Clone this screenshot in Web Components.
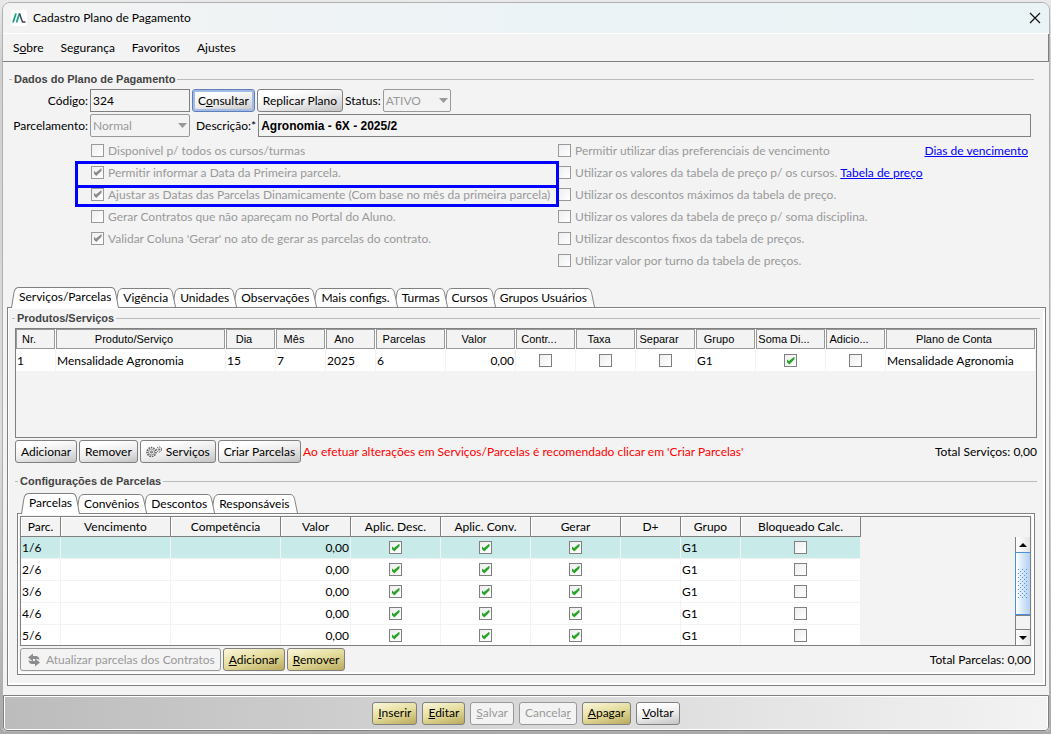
<!DOCTYPE html>
<html lang="pt-BR">
<head>
<meta charset="utf-8">
<title>Cadastro Plano de Pagamento</title>
<style>
body {
    margin: 0;
    padding: 2px 1px 2px 2px;
    font: 12px/16px Lato, "Open Sans", sans-serif;
    color: #000;
    background: linear-gradient(to bottom, #e9e9e9 0, #cfcfcf 60px, #dcdcdc 60%, #a9a9a9 100%);
    --edge: #808080;
    --face: #f3f3f3;
    --off: #999;
    --head-font: "Liberation Sans", Arial, sans-serif;
}
</style>
</head>
<body>
<app-window heading="Cadastro Plano de Pagamento">
    <menu-bar slot="menu"></menu-bar>
    <plan-form></plan-form>
    <tab-panel tabs="Serviços/Parcelas,Vigência,Unidades,Observações,Mais configs.,Turmas,Cursos,Grupos Usuários">
        <services-section></services-section>
        <installments-section></installments-section>
    </tab-panel>
    <action-bar slot="footer">
        <push-button tone="gold"><u>I</u>nserir</push-button>
        <push-button tone="gold"><u>E</u>ditar</push-button>
        <push-button disabled><u>S</u>alvar</push-button>
        <push-button disabled>Cancela<u>r</u></push-button>
        <push-button tone="gold"><u>A</u>pagar</push-button>
        <push-button><u>V</u>oltar</push-button>
    </action-bar>
</app-window>

<script>
// attaches an open shadow root filled from a html string
class BaseElement extends HTMLElement {
    render(html) {
        const template = document.createElement('template');
        template.innerHTML = html;
        this.attachShadow({mode: 'open'}).append(template.content.cloneNode(true));
    }
}

// shared by every element that draws a tick box
const checkStyle = `
input[type=checkbox] {
    appearance: none;
    flex: none;
    width: 13px;
    height: 13px;
    margin: 0;
    border: 1px solid var(--edge);
    background: linear-gradient(135deg, #eee, #fff);
    display: grid;
    place-items: center;
}
input[type=checkbox]:checked::before {
    content: "";
    width: 8px;
    height: 8px;
    background: #2aa52a;
    clip-path: polygon(0 30%, 30% 55%, 100% 0, 100% 35%, 35% 100%, 0 65%);
}
input[type=checkbox]:disabled { border-color: var(--off); }
input[type=checkbox]:disabled:checked::before { background: #8c8c8c; }
`;

class AppWindow extends BaseElement {
    connectedCallback() {
        this.render(`
<style>
:host {
    display: block;
    box-sizing: border-box;
    border: 1px solid #b0b0b0;
    border-radius: 8px 8px 4px 4px;
    background: var(--face);
    overflow: hidden;
}
header {
    display: flex;
    align-items: center;
    gap: 6px;
    height: 30px;
    padding: 0 8px;
    background: linear-gradient(to right, #f3f3f3, #ecf3f6 50%, #eaf3f5);
    border-bottom: 1px solid #fff;
}
h1 {
    flex: 1;
    margin: 0;
    font-size: 12px;
    font-weight: normal;
}
button {
    border: 0;
    padding: 0;
    background: none;
    display: grid;
}
main { padding: 10px 3px 9px 4px; }
</style>
<header>
    <svg width="16" height="16" viewBox="0 0 16 16"><rect width="16" height="16" rx="2" fill="#fff"/><path d="M2 12.500 5 3.500M5.500 12.500 8.500 3.500" stroke="#1d9c86" stroke-width="1.800" fill="none"/><path d="M8.500 3.500 11.500 12h3" stroke="#3c4a50" stroke-width="1.500" fill="none"/></svg>
    <h1></h1>
    <button aria-label="Fechar"><svg width="12" height="12" viewBox="0 0 12 12"><path d="M1 1 11 11M11 1 1 11" stroke="#111" stroke-width="1.200"/></svg></button>
</header>
<slot name="menu"></slot>
<main><slot></slot></main>
<slot name="footer"></slot>
`);
        this.shadowRoot.querySelector('h1').textContent = this.getAttribute('heading');
    }
}
customElements.define('app-window', AppWindow);

class MenuBar extends BaseElement {
    connectedCallback() {
        this.render(`
<style>
:host {
    display: block;
    border-bottom: 1px solid var(--edge);
    border-right: 1px solid var(--edge);
}
nav {
    display: flex;
    align-items: center;
    gap: 17px;
    height: 27px;
    padding: 0 10px;
}
button {
    border: 0;
    padding: 0;
    background: none;
    font: inherit;
    color: inherit;
}
</style>
<nav>
    <button>S<u>o</u>bre</button>
    <button>Segurança</button>
    <button>Favoritos</button>
    <button>Ajustes</button>
</nav>
`);
    }
}
customElements.define('menu-bar', MenuBar);

class PushButton extends BaseElement {
    connectedCallback() {
        this.render(`
<style>
:host { display: block; }
button {
    display: flex;
    align-items: center;
    gap: 4px;
    box-sizing: border-box;
    height: 23px;
    padding: 0 5px;
    border: 1px solid var(--edge);
    border-radius: 3px;
    font: inherit;
    color: #000;
    white-space: nowrap;
    background: linear-gradient(170deg, #fff 20%, #ececec 55%, #c4c4c4 100%);
}
:host([tone=gold]) button {
    background: linear-gradient(165deg, #f8f4d4 5%, #e4dc9c 50%, #b9a95c 100%);
}
:host([focused]) button {
    border-color: #5f7fb8;
    box-shadow: inset 0 0 0 2px #a3bce6;
}
button:disabled {
    color: var(--off);
    border-color: var(--off);
    background: var(--face);
}
</style>
<button><slot name="icon"></slot><span><slot></slot></span></button>
`);
        this.shadowRoot.querySelector('button').disabled = this.hasAttribute('disabled');
    }
}
customElements.define('push-button', PushButton);

class CheckField extends BaseElement {
    connectedCallback() {
        this.render(`
<style>
${checkStyle}
:host { display: block; }
label {
    display: flex;
    align-items: center;
    gap: 4px;
    height: 22px;
    color: var(--off);
    white-space: nowrap;
}
label input[type=checkbox] { margin-bottom: 2px; }
</style>
<label><input type="checkbox" disabled><span><slot></slot></span></label>
`);
        this.shadowRoot.querySelector('input').checked = this.hasAttribute('checked');
    }
}
customElements.define('check-field', CheckField);

// titled group: a rule with the title sitting on it
class GroupBox extends BaseElement {
    connectedCallback() {
        this.render(`
<style>
:host { display: block; }
h2 {
    display: flex;
    align-items: center;
    gap: 2px;
    margin: 0 0 3px;
    font: bold 11px/14px var(--head-font);
    color: #444;
}
h2::before, h2::after {
    content: "";
    width: 3px;
    height: 1px;
    background: #bbb;
}
h2::after { flex: 1; }
</style>
<h2></h2>
<slot></slot>
`);
        this.shadowRoot.querySelector('h2').textContent = this.getAttribute('heading');
    }
}
customElements.define('group-box', GroupBox);

class PlanForm extends BaseElement {
    connectedCallback() {
        this.render(`
<style>
:host { display: block; }
group-box { margin: 0 12px 15px 2px; }
.row {
    display: flex;
    align-items: center;
    gap: 2px;
    height: 23px;
    margin-bottom: 2px;
    padding-right: 3px;
}
.row > label { white-space: nowrap; }
.row > label:first-child {
    width: 79px;
    display: flex;
    justify-content: flex-end;
}
input, select {
    box-sizing: border-box;
    width: 100px;
    height: 23px;
    margin: 0;
    padding: 0 2px;
    border: 1px solid var(--edge);
    background: var(--face);
    font: inherit;
    color: #000;
}
select {
    appearance: none;
    border-color: var(--off);
    border-radius: 2px;
}
select:disabled {
    color: var(--off);
    opacity: 1;
}
.select {
    display: grid;
    align-items: center;
}
.select > * { grid-area: 1 / 1; }
.select svg {
    justify-self: end;
    margin-right: 3px;
}
#status { width: 68px; }
#descricao {
    flex: 1;
    font: bold 12px var(--head-font);
}
.gap { margin-left: 4px; }
.checks {
    position: relative;
    display: grid;
    grid-template-columns: 467px 1fr;
    grid-template-rows: repeat(6, 22px);
    grid-auto-flow: column;
    margin-top: 3px;
    padding-left: 82px;
}
.line {
    display: flex;
    align-items: center;
    gap: 3px;
    padding-right: 6px;
}
.line a { color: #00f; }
.push { margin-left: auto; }
.skip { grid-area: 6 / 1; }
/* highlight frames laid over the two date options */
.mark {
    position: absolute;
    left: 66px;
    width: 484px;
    box-sizing: border-box;
    border: 3px solid #00f;
}
.mark.first { top: 21px; height: 27px; }
.mark.second { top: 45px; height: 22px; }
</style>
<group-box heading="Dados do Plano de Pagamento">
    <div class="row">
        <label for="codigo">Código:</label>
        <input id="codigo" value="324">
        <push-button focused>C<u>o</u>nsultar</push-button>
        <push-button>Replicar Plano</push-button>
        <label for="status">Status:</label>
        <div class="select">
            <select id="status" disabled><option>ATIVO</option></select>
            <svg width="9" height="5"><path d="M0 0h9L4.500 5z" fill="#999"/></svg>
        </div>
    </div>
    <div class="row">
        <label for="parcelamento">Parcelamento:</label>
        <div class="select">
            <select id="parcelamento" disabled><option>Normal</option></select>
            <svg width="9" height="5"><path d="M0 0h9L4.500 5z" fill="#999"/></svg>
        </div>
        <label class="gap" for="descricao">Descrição:*</label>
        <input id="descricao" value="Agronomia - 6X - 2025/2">
    </div>
    <div class="checks">
        <check-field>Disponível p/ todos os cursos/turmas</check-field>
        <check-field checked>Permitir informar a Data da Primeira parcela.</check-field>
        <check-field checked>Ajustar as Datas das Parcelas Dinamicamente (Com base no mês da primeira parcela)</check-field>
        <check-field>Gerar Contratos que não apareçam no Portal do Aluno.</check-field>
        <check-field checked>Validar Coluna 'Gerar' no ato de gerar as parcelas do contrato.</check-field>
        <span class="skip"></span>
        <div class="line"><check-field>Permitir utilizar dias preferenciais de vencimento</check-field><a class="push" href="#dias">Dias de vencimento</a></div>
        <div class="line"><check-field>Utilizar os valores da tabela de preço p/ os cursos.</check-field><a href="#tabela">Tabela de preço</a></div>
        <check-field>Utilizar os descontos máximos da tabela de preço.</check-field>
        <check-field>Utilizar os valores da tabela de preço p/ soma disciplina.</check-field>
        <check-field>Utilizar descontos fixos da tabela de preços.</check-field>
        <check-field>Utilizar valor por turno da tabela de preços.</check-field>
        <div class="mark first"></div>
        <div class="mark second"></div>
    </div>
</group-box>
`);
    }
}
customElements.define('plan-form', PlanForm);

class TabPanel extends BaseElement {
    connectedCallback() {
        this.render(`
<style>
:host { display: block; }
.strip {
    display: flex;
    align-items: flex-end;
    height: 20px;
    padding-left: 4px;
}
button {
    display: flex;
    position: relative;
    height: 19px;
    margin: 0 -4px 0 0;
    padding: 0;
    border: 0;
    background: none;
    font: inherit;
    line-height: 18px;
    color: inherit;
    white-space: nowrap;
}
button span {
    box-sizing: border-box;
    height: 100%;
    border-top: 1px solid var(--edge);
    background: #fff;
}
button svg {
    width: 8px;
    height: 100%;
    fill: #fff;
    stroke: var(--edge);
}
button[aria-selected=true] {
    height: 21px;
    margin-bottom: -1px;
}
.panel {
    border: 1px solid var(--edge);
    box-shadow: inset 1px 1px #fff, inset -2px -2px #fff;
    padding: var(--panel-padding, 3px 5px 10px);
}
</style>
<div class="strip" role="tablist"></div>
<div class="panel" role="tabpanel"><slot></slot></div>
`);
        const names = this.getAttribute('tabs').split(',');
        names.forEach((name, i) => {
            const tab = document.createElement('button');
            tab.setAttribute('role', 'tab');
            tab.setAttribute('aria-selected', i === 0);
            // earlier tabs overlap the later ones
            tab.style.zIndex = names.length - i;
            tab.innerHTML = `
<svg viewBox="0 0 8 20" preserveAspectRatio="none"><path d="M.5 20 3 5Q4 .5 8 .5V20" stroke="none"/><path d="M.5 20 3 5Q4 .5 8 .5" fill="none"/></svg><span></span><svg viewBox="0 0 8 20" preserveAspectRatio="none"><path d="M0 .5Q3.500.5 4.500 5L7.500 20H0" stroke="none"/><path d="M0 .5Q3.500.5 4.500 5L7.500 20" fill="none"/></svg>`;
            tab.querySelector('span').textContent = name;
            this.shadowRoot.querySelector('.strip').append(tab);
        });
    }
}
customElements.define('tab-panel', TabPanel);

class ScrollBar extends BaseElement {
    connectedCallback() {
        this.render(`
<style>
:host {
    display: flex;
    flex-direction: column;
    box-sizing: border-box;
    width: 15px;
    border-left: 1px solid var(--edge);
}
button {
    display: grid;
    place-items: center;
    height: 15px;
    padding: 0;
    border: 0;
    background: linear-gradient(to right, #fff, #e4e4e4);
}
.thumb {
    height: 61px;
    margin-left: -1px;
    border: 1px solid #4a90e0;
    border-right: 0;
    display: grid;
    place-items: center;
    background: linear-gradient(to right, #fff, #dcebfb 40%, #b4d0f2);
}
.track {
    flex: 1;
    border: 1px solid var(--edge);
    border-width: 1px 0;
}
</style>
<button aria-label="Subir"><svg width="8" height="4"><path d="M0 4 4 0 8 4z"/></svg></button>
<div class="thumb">
    <svg width="10" height="30"><defs><pattern id="grip" width="4" height="4" patternUnits="userSpaceOnUse"><path d="M0 0h1v1H0zM2 2h1v1H2z" fill="#4a90e0"/></pattern></defs><rect width="10" height="30" fill="url(#grip)"/></svg>
</div>
<div class="track"></div>
<button aria-label="Descer"><svg width="8" height="4"><path d="M0 0 4 4 8 0z"/></svg></button>
`);
    }
}
customElements.define('scroll-bar', ScrollBar);

// columns: [title, width, kind], kind is text, num or check; a width of 0 takes what is left
class DataGrid extends BaseElement {
    connectedCallback() {
        this.render(`
<style>
${checkStyle}
:host {
    display: flex;
    box-sizing: border-box;
    height: var(--grid-height);
    border: 1px solid var(--edge);
    overflow: hidden;
}
table {
    table-layout: fixed;
    width: 10px;
    border-collapse: separate;
    border-spacing: 0;
    align-self: flex-start;
}
:host([fill]) table { width: 100%; }
th {
    box-sizing: border-box;
    height: 20px;
    padding: 1px 0 0;
    font-weight: normal;
    line-height: 18px;
    white-space: nowrap;
    border-right: 1px solid var(--edge);
    border-bottom: 1px solid var(--edge);
    box-shadow: inset 1px 1px #fff;
}
:host([raised]) th {
    height: 21px;
    border: 0;
    box-shadow: none;
    padding: 0 1px 1px 0;
    background: #fff;
}
:host([raised]) th div {
    border: 1px solid #999;
    background: var(--face);
    font: 11px/18px var(--head-font);
    padding: 0 14px 0 1px;
}
td {
    box-sizing: border-box;
    height: 22px;
    padding: 0 1px;
    line-height: 16px;
    white-space: nowrap;
    background: #fff;
    border: solid var(--face);
    border-width: 0 1px 1px 0;
}
tr.selected td { background: #c8ebea; }
td.num { text-align: right; }
td.check input { margin: auto; }
scroll-bar { margin: 20px 0 0 auto; }
</style>
<table><colgroup></colgroup><thead><tr></tr></thead><tbody></tbody></table>
`);
    }
    setData(columns, rows) {
        const root = this.shadowRoot;
        columns.forEach(([title, width]) => {
            const col = document.createElement('col');
            if (width) col.style.width = width + 'px';
            root.querySelector('colgroup').append(col);
            const th = document.createElement('th');
            th.innerHTML = '<div></div>';
            th.firstChild.textContent = title;
            root.querySelector('thead tr').append(th);
        });
        rows.forEach((row, r) => {
            const tr = document.createElement('tr');
            if (!this.hasAttribute('raised') && r === 0) tr.classList.add('selected');
            row.forEach((value, i) => {
                const td = document.createElement('td');
                const kind = columns[i][2];
                td.classList.add(kind);
                if (kind === 'check') {
                    const box = document.createElement('input');
                    box.type = 'checkbox';
                    box.checked = value;
                    box.setAttribute('aria-label', columns[i][0]);
                    td.append(box);
                } else {
                    td.textContent = value;
                }
                tr.append(td);
            });
            root.querySelector('tbody').append(tr);
        });
        if (this.hasAttribute('scroll')) root.append(document.createElement('scroll-bar'));
    }
}
customElements.define('data-grid', DataGrid);

const sectionStyle = `
:host { display: block; }
.row {
    display: flex;
    align-items: center;
    gap: 2px;
    margin-top: 2px;
}
.total { margin-left: auto; }
`;

class ServicesSection extends BaseElement {
    connectedCallback() {
        this.render(`
<style>
${sectionStyle}
group-box { margin: 0 0 0 -1px; }
data-grid { --grid-height: 110px; margin: 0 3px; }
.row { padding: 0 3px; }
.warning { color: #f00; }
</style>
<group-box heading="Produtos/Serviços">
    <data-grid raised fill></data-grid>
    <div class="row">
        <push-button>Adicionar</push-button>
        <push-button>Remover</push-button>
        <push-button><svg slot="icon" width="16" height="12" viewBox="0 0 16 12" fill="none" stroke="#555"><circle cx="5.500" cy="6" r="4.500" stroke-width="1.500" stroke-dasharray="1.500 1"/><circle cx="5.500" cy="6" r="3" stroke="#888"/><circle cx="5.500" cy="6" r="1"/><circle cx="13" cy="3.500" r="2.500" stroke-dasharray="1.500 .8"/><circle cx="13" cy="3.500" r=".7"/></svg>Serviços</push-button>
        <push-button>Criar Parcelas</push-button>
        <span class="warning">Ao efetuar alterações em Serviços/Parcelas é recomendado clicar em 'Criar Parcelas'</span>
        <span class="total">Total Serviços: 0,00</span>
    </div>
</group-box>
`);
        this.shadowRoot.querySelector('data-grid').setData([
            ['Nr.', 40, 'text'],
            ['Produto/Serviço', 170, 'text'],
            ['Dia', 50, 'text'],
            ['Mês', 50, 'text'],
            ['Ano', 50, 'text'],
            ['Parcelas', 70, 'text'],
            ['Valor', 70, 'num'],
            ['Contr...', 60, 'check'],
            ['Taxa', 60, 'check'],
            ['Separar', 60, 'check'],
            ['Grupo', 60, 'text'],
            ['Soma Di...', 70, 'check'],
            ['Adicio...', 60, 'check'],
            ['Plano de Conta', 0, 'text']
        ], [
            ['1', 'Mensalidade Agronomia', '15', '7', '2025', '6', '0,00', false, false, false, 'G1', true, false, 'Mensalidade Agronomia']
        ]);
    }
}
customElements.define('services-section', ServicesSection);

class InstallmentsSection extends BaseElement {
    connectedCallback() {
        this.render(`
<style>
${sectionStyle}
group-box { margin: 11px 3px 0 2px; }
tab-panel { --panel-padding: 2px 3px 3px 2px; margin: 5px 2px 0; }
data-grid { --grid-height: 130px; }
</style>
<group-box heading="Configurações de Parcelas">
    <tab-panel tabs="Parcelas,Convênios,Descontos,Responsáveis">
        <data-grid scroll></data-grid>
        <div class="row">
            <push-button disabled><svg slot="icon" width="16" height="14" viewBox="0 0 16 14" fill="#8c8c8c"><path d="M2 4.500 7 .5V3h3q3 0 3.500 4Q12 5.800 10 6H7v2.500z"/><path d="M14 9.500 9 13.500V11H6q-3 0-3.500-4Q4 8.200 6 8h3V5.500z"/></svg>Atualizar parcelas dos Contratos</push-button>
            <push-button tone="gold"><u>A</u>dicionar</push-button>
            <push-button tone="gold"><u>R</u>emover</push-button>
            <span class="total">Total Parcelas: 0,00</span>
        </div>
    </tab-panel>
</group-box>
`);
        this.shadowRoot.querySelector('data-grid').setData([
            ['Parc.', 40, 'text'],
            ['Vencimento', 110, 'text'],
            ['Competência', 110, 'text'],
            ['Valor', 70, 'num'],
            ['Aplic. Desc.', 90, 'check'],
            ['Aplic. Conv.', 90, 'check'],
            ['Gerar', 90, 'check'],
            ['D+', 60, 'text'],
            ['Grupo', 60, 'text'],
            ['Bloqueado Calc.', 120, 'check']
        ], [1, 2, 3, 4, 5].map(n => [n + '/6', '', '', '0,00', true, true, true, '', 'G1', false]));
    }
}
customElements.define('installments-section', InstallmentsSection);

class ActionBar extends BaseElement {
    connectedCallback() {
        this.render(`
<style>
:host {
    display: flex;
    justify-content: center;
    align-items: center;
    gap: 5px;
    box-sizing: border-box;
    height: 36px;
    border: 1px solid var(--edge);
    border-radius: 0 0 4px 4px;
    box-shadow: inset 0 0 0 1px #fff;
    background: linear-gradient(to right, #bcbcbc, #f3f3f3);
}
</style>
<slot></slot>
`);
    }
}
customElements.define('action-bar', ActionBar);
</script>
</body>
</html>
